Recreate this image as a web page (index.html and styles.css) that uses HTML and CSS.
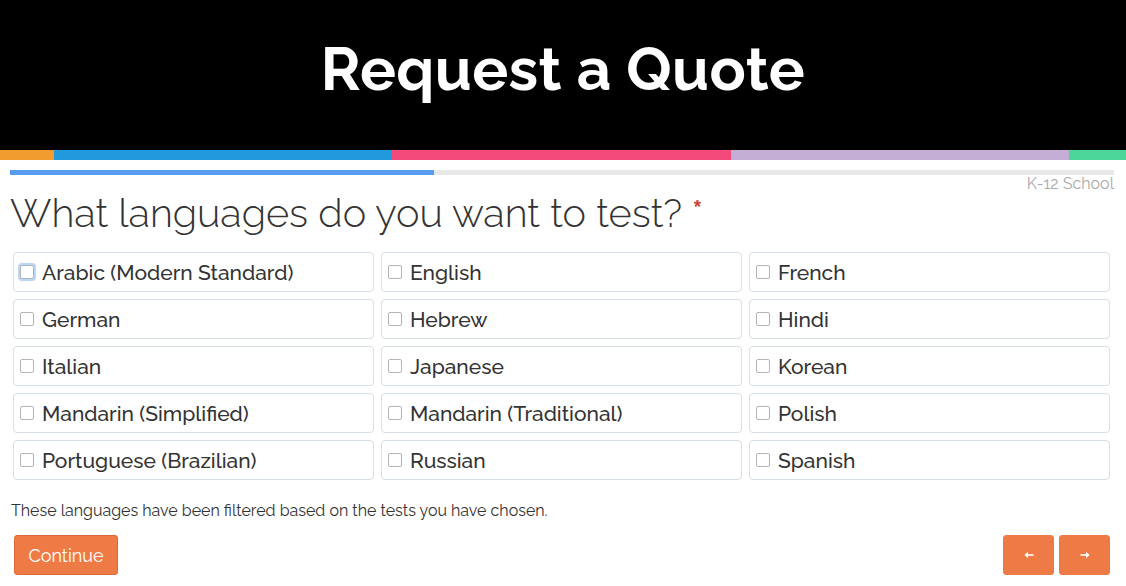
FILE: index.html
```html
<!DOCTYPE html>
<html>
<head>
<meta charset="utf-8">
<link rel="stylesheet" href="styles.css">
</head>
<body>
<header class="hero">
  <h1>Request a Quote</h1>
</header>
<div class="strip">
  <span class="s-orange"></span>
  <span class="s-blue"></span>
  <span class="s-pink"></span>
  <span class="s-purple"></span>
  <span class="s-green"></span>
</div>
<main class="main">
  <div class="progress"><div class="progress-fill"></div></div>
  <div class="meta">K-12 School</div>
  <h2 class="question">What languages do you want to test? <span class="req">*</span></h2>
  <div class="grid">
    <label class="opt"><span class="box focus"></span>Arabic (Modern Standard)</label>
    <label class="opt"><span class="box"></span>English</label>
    <label class="opt"><span class="box"></span>French</label>
    <label class="opt"><span class="box"></span>German</label>
    <label class="opt"><span class="box"></span>Hebrew</label>
    <label class="opt"><span class="box"></span>Hindi</label>
    <label class="opt"><span class="box"></span>Italian</label>
    <label class="opt"><span class="box"></span>Japanese</label>
    <label class="opt"><span class="box"></span>Korean</label>
    <label class="opt"><span class="box"></span>Mandarin (Simplified)</label>
    <label class="opt"><span class="box"></span>Mandarin (Traditional)</label>
    <label class="opt"><span class="box"></span>Polish</label>
    <label class="opt"><span class="box"></span>Portuguese (Brazilian)</label>
    <label class="opt"><span class="box"></span>Russian</label>
    <label class="opt"><span class="box"></span>Spanish</label>
  </div>
  <p class="note">These languages have been filtered based on the tests you have chosen.</p>
  <div class="actions">
    <button class="btn continue">Continue</button>
    <div class="nav">
      <button class="btn arrow" aria-label="Back">
        <svg width="10" height="8" viewBox="0 0 10 8"><path d="M1 4H9.5" stroke="#fff" stroke-width="1.6"/><path d="M0.5 4L4 0.8V7.2Z" fill="#fff"/></svg>
      </button>
      <button class="btn arrow" aria-label="Next">
        <svg width="10" height="8" viewBox="0 0 10 8"><path d="M0.5 4H9" stroke="#fff" stroke-width="1.6"/><path d="M9.5 4L6 0.8V7.2Z" fill="#fff"/></svg>
      </button>
    </div>
  </div>
</main>
</body>
</html>
```
FILE: styles.css
```css
* { box-sizing: border-box; }
body {
  margin: 0;
  background: #fff;
  font-family: "Raleway", Lato, "Open Sans", sans-serif;
  color: #333;
}
.hero {
  height: 150px;
  background: #000;
  display: flex;
  align-items: center;
  justify-content: center;
}
.hero h1 {
  margin: 0;
  color: #fff;
  font-size: 60px;
  font-weight: 700;
  letter-spacing: 0.4px;
  padding-bottom: 12px;
}
.strip { display: flex; height: 10px; }
.strip span { display: block; height: 100%; }
.s-orange { width: 54px; background: #f09c2e; }
.s-blue { width: 338px; background: #2299dc; }
.s-pink { width: 339px; background: #f34a7b; }
.s-purple { width: 338px; background: #c4aed6; }
.s-green { flex: 1; background: #4cd699; }

.main { padding: 10px 12px 0 10px; }
.progress { height: 5px; background: #e8e8e8; }
.progress-fill { height: 100%; width: 38.4%; background: #589cf0; }
.meta {
  text-align: right;
  font-size: 16px;
  color: #aaa;
  line-height: 18px;
}
.question {
  margin: 0;
  font-size: 39.7px;
  font-weight: 300;
  line-height: 40px;
  color: #333;
}
.req {
  color: #c9473a;
  font-size: 30px;
  font-weight: 700;
  line-height: 0;
  vertical-align: 6px;
}
.grid {
  margin: 19px 0 0 3px;
  display: grid;
  grid-template-columns: repeat(3, 1fr);
  column-gap: 7px;
  row-gap: 7px;
  width: 1097px;
}
.opt {
  height: 40px;
  border: 1px solid #d6dfe7;
  border-radius: 4px;
  display: flex;
  align-items: center;
  padding-left: 6px;
  font-size: 21px;
  font-weight: 500;
  color: #333;
}
.box {
  width: 14px;
  height: 14px;
  border: 1px solid #b4b4b4;
  border-radius: 2px;
  background: #fff;
  margin-right: 8px;
  flex: none;
}
.box.focus { box-shadow: 0 0 0 2px #b9d7f8; }
.note {
  margin: 22px 0 0 1px;
  font-size: 16px;
  line-height: 18px;
  color: #333;
}
.actions {
  margin-top: 15px;
  display: flex;
  justify-content: space-between;
  padding-left: 4px;
}
.btn {
  height: 40px;
  border: 1px solid #dc6a39;
  background: #ee7a45;
  color: #fff;
  border-radius: 3px;
  font-family: inherit;
  cursor: pointer;
}
.continue { width: 104px; font-size: 18px; padding: 0; }
.nav { display: flex; gap: 5px; margin-right: 4px; }
.arrow {
  width: 51px;
  border-color: #ee7a45;
  display: flex;
  align-items: center;
  justify-content: center;
  padding: 0;
}
```
